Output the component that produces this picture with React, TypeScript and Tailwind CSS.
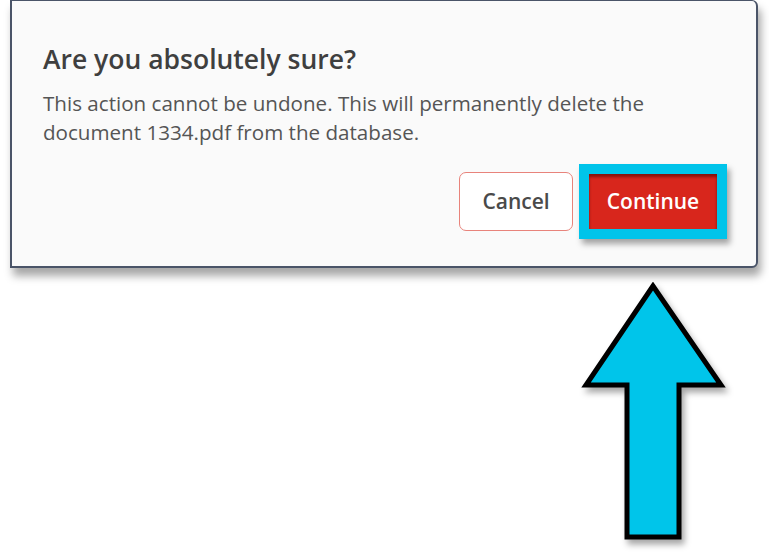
export default function App() {
  return (
    <div className="relative h-[555px] w-[769px] overflow-hidden bg-white font-['Open_Sans',sans-serif]">
      <div className="pl-[10px]">
        <div className="flex h-[268px] w-[748px] flex-col rounded-r-[6px] border-2 border-t border-[#4a5468] bg-[#fafafa] pl-[31px] pr-[39px] pt-[40px] shadow-[3px_8px_9px_rgba(0,0,0,0.35)]">
          <h2 className="text-[26.5px] font-semibold leading-[36px] text-[#3f3f3f]">Are you absolutely sure?</h2>
          <p className="mt-[12px] text-[20.6px] leading-[29px] text-[#555555]">
            This action cannot be undone. This will permanently delete the document 1334.pdf from the database.
          </p>
          <div className="mt-[17px] flex items-center justify-end gap-[6px]">
            <button className="h-[59px] w-[114px] rounded-[7px] border border-[#e8837b] bg-white text-[21px] font-semibold text-[#4a4a4a]">
              Cancel
            </button>
            <div className="mr-[-10px] bg-[#00c4ea] p-[10px] shadow-[3px_5px_6px_rgba(0,0,0,0.35)]">
              <button className="h-[55px] w-[128px] bg-[#d8261c] text-[21px] font-semibold text-white shadow-[inset_0_3px_3px_rgba(100,10,5,0.7)]">
                Continue
              </button>
            </div>
          </div>
        </div>
      </div>

      {/* annotation arrow */}
      <svg
        className="absolute left-[580px] top-[282px] drop-shadow-[3px_5px_3px_rgba(0,0,0,0.35)]"
        width="148"
        height="262"
        viewBox="0 0 148 262"
      >
        <path
          d="M73 4 L6 103 L47 103 L47 255 L99 255 L99 103 L141 103 Z"
          fill="#00c5ea"
          stroke="#000"
          strokeWidth="5"
          strokeLinejoin="miter"
        />
      </svg>
    </div>
  );
}
